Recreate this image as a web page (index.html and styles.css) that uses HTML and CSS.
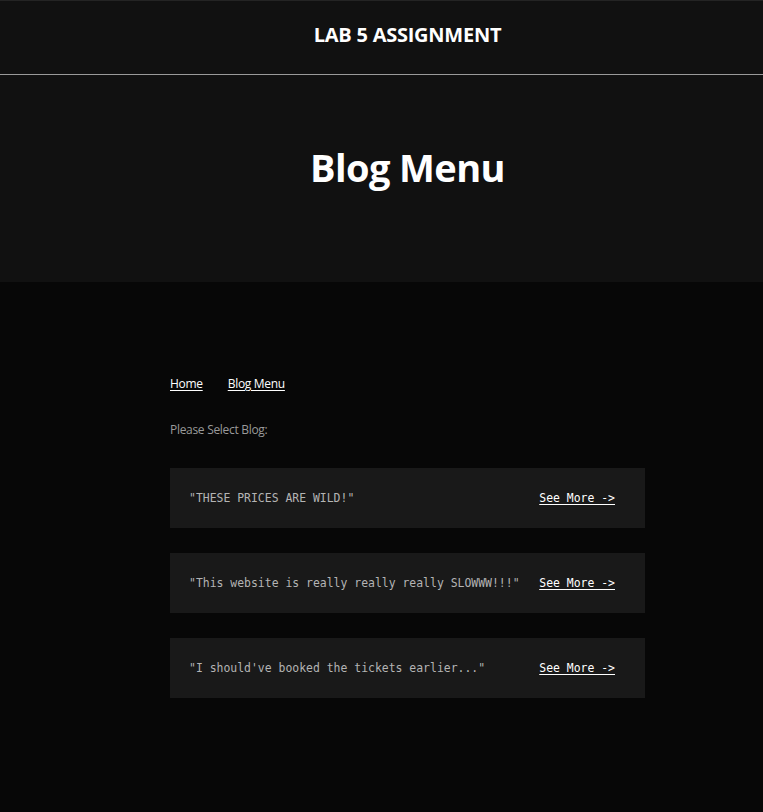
FILE: index.html
```html
<!DOCTYPE html>
<html lang="en">
<head>
<meta charset="utf-8">
<title>Blog Menu</title>
<link rel="stylesheet" href="styles.css">
</head>
<body>
<header class="site-header">
  <div class="inner"><h1 class="site-title">LAB 5 ASSIGNMENT</h1></div>
</header>
<section class="hero">
  <div class="inner"><h2 class="hero-title">Blog Menu</h2></div>
</section>
<main class="main">
  <div class="inner">
    <div class="content">
      <nav class="crumbs">
        <a href="#">Home</a>
        <a href="#">Blog Menu</a>
      </nav>
      <p class="prompt">Please Select Blog:</p>
      <ul class="blogs">
        <li class="blog"><span class="quote">"THESE PRICES ARE WILD!"</span><a class="more" href="#">See More -&gt;</a></li>
        <li class="blog"><span class="quote">"This website is really really really SLOWWW!!!"</span><a class="more" href="#">See More -&gt;</a></li>
        <li class="blog"><span class="quote">"I should've booked the tickets earlier..."</span><a class="more" href="#">See More -&gt;</a></li>
      </ul>
    </div>
  </div>
</main>
</body>
</html>
```
FILE: styles.css
```css
html, body { margin: 0; padding: 0; }
body {
  background: #070707;
  color: #fff;
  font-family: "Open Sans", "Noto Sans", sans-serif;
  min-height: 812px;
}
.inner {
  padding-left: 52px;
}
.site-header {
  background: #111111;
  border-top: 1px solid #242424;
  border-bottom: 1px solid #9a9a9a;
  height: 73px;
  box-sizing: content-box;
}
.site-header .inner {
  height: 73px;
  display: flex;
  align-items: center;
  justify-content: center;
}
.site-title {
  margin: 0;
  font-family: "Open Sans", sans-serif;
  font-weight: 700;
  font-size: 20px;
  letter-spacing: -0.25px;
  color: #fff;
  padding-bottom: 6px;
}
.hero {
  background: #111111;
  height: 207px;
}
.hero .inner {
  height: 207px;
  display: flex;
  justify-content: center;
  align-items: flex-start;
  box-sizing: border-box;
}
.hero-title {
  margin: 0;
  font-family: "Open Sans", sans-serif;
  font-weight: 700;
  font-size: 38px;
  letter-spacing: -0.6px;
  line-height: 1;
  padding-top: 73px;
}
.main .inner {
  display: flex;
  justify-content: center;
}
.content {
  width: 475px;
  padding-top: 93px;
  padding-bottom: 113px;
}
.crumbs {
  display: flex;
  gap: 25px;
  font-size: 12px;
  letter-spacing: -0.3px;
  line-height: 17px;
}
.crumbs a {
  color: #fff;
  text-decoration: underline;
  text-underline-offset: 2px;
}
.prompt {
  margin: 29px 0 0;
  font-size: 12px;
  letter-spacing: -0.3px;
  color: #9a9a9a;
  line-height: 17px;
}
.blogs {
  list-style: none;
  margin: 30px 0 0;
  padding: 0;
  display: flex;
  flex-direction: column;
  gap: 25px;
}
.blog {
  background: #191919;
  height: 60px;
  display: flex;
  align-items: center;
  justify-content: space-between;
  padding: 0 30px 0 19px;
  font-family: "DejaVu Sans Mono", "Liberation Mono", monospace;
  font-size: 11.45px;
}
.quote { color: #b4b4b4; }
.more {
  color: #fff;
  text-decoration: underline;
  text-underline-offset: 2px;
}
```
